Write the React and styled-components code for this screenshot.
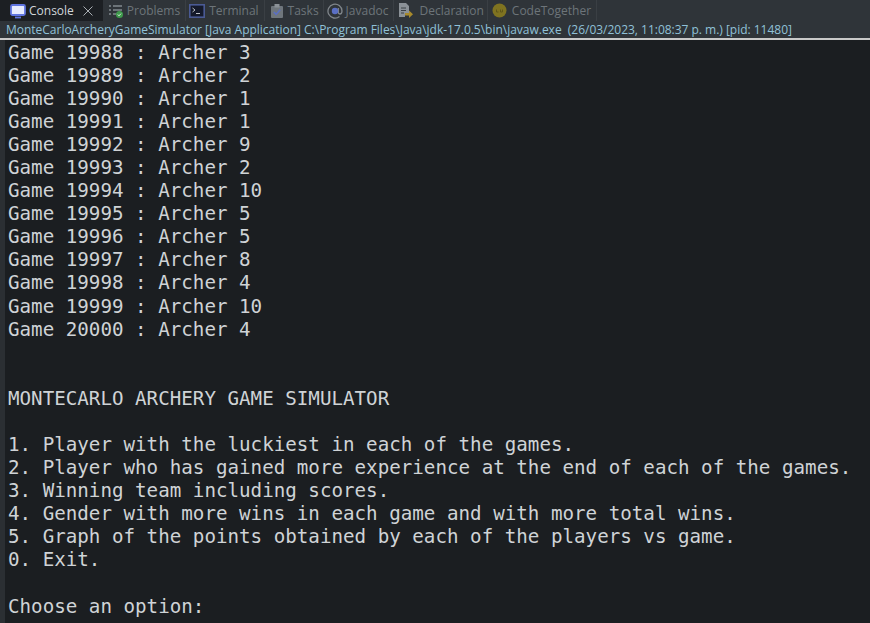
import styled, { createGlobalStyle } from "styled-components";

const GlobalStyle = createGlobalStyle`
  html, body {
    margin: 0;
    padding: 0;
    background: #1b1e21;
    overflow: hidden;
  }
`;

const Window = styled.div`
  width: 870px;
  height: 623px;
  display: flex;
  flex-direction: column;
  overflow: hidden;
  background: #1b1e21;
  font-family: "Open Sans", "Noto Sans", sans-serif;
`;

const TabBar = styled.div`
  display: flex;
  align-items: stretch;
  height: 21px;
  flex: none;
  background: #2f3439;
`;

const Tab = styled.div`
  display: flex;
  align-items: center;
  gap: ${(p) => p.$gap ?? 3}px;
  padding: 0 ${(p) => p.$pad ?? 5}px 0 ${(p) => p.$left ?? 3}px;
  font-size: 12px;
  white-space: nowrap;
  color: ${(p) => (p.$active ? "#d2d6da" : "#6d7479")};
  background: ${(p) => (p.$active ? "#1c1f23" : "transparent")};
  border-right: 1px solid ${(p) => (p.$active ? "#1c1f23" : "#3a3f44")};
`;

const CloseMark = styled.span`
  display: flex;
  margin-left: 5px;
  color: #a9aeb3;
`;

const TitleBar = styled.div`
  height: 16.5px;
  flex: none;
  display: flex;
  align-items: center;
  padding-left: 6px;
  background: #2f3439;
  color: #8fc1d8;
  font-size: 12px;
  letter-spacing: -0.015px;
  white-space: pre;
`;

const Rule = styled.div`
  height: 2px;
  flex: none;
  background: #c9c9c9;
`;

const ConsoleBody = styled.div`
  flex: 1;
  min-height: 0;
  display: flex;
`;

const Gutter = styled.div`
  width: 5px;
  flex: none;
  background: #2b2f33;
`;

const Output = styled.pre`
  margin: 0;
  padding: 1.2px 0 0 3px;
  color: #cfd3d6;
  font-family: "DejaVu Sans Mono", "Liberation Mono", monospace;
  font-size: 19.2px;
  line-height: 23.08px;
`;

function ConsoleIcon() {
  return (
    <svg width="16" height="16" viewBox="0 0 16 16">
      <rect x="1" y="2" width="14" height="10" rx="1.5" fill="#e6ebff" stroke="#5f74e0" strokeWidth="1.8" />
      <path d="M5 14.500h6" stroke="#5f74e0" strokeWidth="1.8" />
    </svg>
  );
}

function ProblemsIcon() {
  return (
    <svg width="16" height="16" viewBox="0 0 16 16">
      <path d="M1 3h2M1 7h2M1 11h2" stroke="#6d7479" strokeWidth="1.800" />
      <path d="M5 3h9M5 7h9M5 11h4" stroke="#6d7479" strokeWidth="1.800" />
      <circle cx="11.500" cy="11.500" r="3.500" fill="#3f9a4c" />
      <path d="M9.800 11.500l1.200 1.300 2-2.200" fill="none" stroke="#d8f0dc" strokeWidth="1" />
    </svg>
  );
}

function TerminalIcon() {
  return (
    <svg width="16" height="16" viewBox="0 0 16 16">
      <rect x="0.800" y="1.800" width="14.400" height="12.400" fill="#151a2b" stroke="#4a5a94" strokeWidth="1.600" />
      <path d="M3.500 5l2.500 2-2.500 2M7 10.500h4" fill="none" stroke="#b9bec4" strokeWidth="1" />
    </svg>
  );
}

function TasksIcon() {
  return (
    <svg width="16" height="16" viewBox="0 0 16 16">
      <rect x="2" y="3" width="12" height="12" rx="1" fill="#6f767c" />
      <rect x="5.500" y="1" width="5" height="3.500" fill="#8b9197" />
      <path d="M4.800 9l2.300 2.400 4-4.600" fill="none" stroke="#5a6fc4" strokeWidth="1.600" />
    </svg>
  );
}

function JavadocIcon() {
  return (
    <svg width="16" height="16" viewBox="0 0 16 16">
      <path d="M12.500 13.500A7 7 0 1 1 15 8c0 1.800-1 3-2.200 3-1 0-1.500-.7-1.500-1.700V5" fill="none" stroke="#80868b" strokeWidth="1.300" />
      <circle cx="8" cy="8" r="3.200" fill="#5a6fc4" />
    </svg>
  );
}

function DeclarationIcon() {
  return (
    <svg width="17" height="17" viewBox="0 0 17 17">
      <path d="M2 1h7l3 3v7H8v4H2z" fill="#8b9197" />
      <path d="M4 6h5M4 8.500h5M4 11h3" stroke="#3b4045" strokeWidth="1" />
      <path d="M8 11h4V8.500l4 3.700-4 3.800v-2.500H8z" fill="#a88a2c" />
    </svg>
  );
}

function CodeTogetherIcon() {
  return (
    <svg width="15" height="15" viewBox="0 0 15 15">
      <circle cx="7.500" cy="7.500" r="7" fill="#7f7320" />
      <path d="M4.500 6.500v2.500h2M8.500 6.500v2.500h2v-2.500" fill="none" stroke="#5f5618" strokeWidth="1" />
    </svg>
  );
}

const games = [
  [19988, 3],
  [19989, 2],
  [19990, 1],
  [19991, 1],
  [19992, 9],
  [19993, 2],
  [19994, 10],
  [19995, 5],
  [19996, 5],
  [19997, 8],
  [19998, 4],
  [19999, 10],
  [20000, 4],
];

const menu = `

MONTECARLO ARCHERY GAME SIMULATOR

1. Player with the luckiest in each of the games.
2. Player who has gained more experience at the end of each of the games.
3. Winning team including scores.
4. Gender with more wins in each game and with more total wins.
5. Graph of the points obtained by each of the players vs game.
0. Exit.

Choose an option:`;

export default function App() {
  const results = games.map(([game, archer]) => `Game ${game} : Archer ${archer}`).join("\n");

  return (
    <Window>
      <GlobalStyle />
      <TabBar>
        <Tab $active $left={10} $pad={8}>
          <ConsoleIcon />
          Console
          <CloseMark>
            <svg width="12" height="12" viewBox="0 0 12 12">
              <path d="M1.500 1.500l9 9M10.500 1.500l-9 9" stroke="currentColor" strokeWidth="1" />
            </svg>
          </CloseMark>
        </Tab>
        <Tab $left={5}>
          <ProblemsIcon />
          Problems
        </Tab>
        <Tab $gap={4}>
          <TerminalIcon />
          Terminal
        </Tab>
        <Tab $left={4} $pad={4}>
          <TasksIcon />
          Tasks
        </Tab>
        <Tab>
          <JavadocIcon />
          Javadoc
        </Tab>
        <Tab $gap={5} $pad={3}>
          <DeclarationIcon />
          Declaration
        </Tab>
        <Tab $left={4} $gap={5}>
          <CodeTogetherIcon />
          CodeTogether
        </Tab>
      </TabBar>
      <TitleBar>
        {"MonteCarloArcheryGameSimulator [Java Application] C:\\Program Files\\Java\\jdk-17.0.5\\bin\\javaw.exe  (26/03/2023, 11:08:37 p. m.) [pid: 11480]"}
      </TitleBar>
      <Rule />
      <ConsoleBody>
        <Gutter />
        <Output>
          {results}
          {"\n"}
          {menu}
        </Output>
      </ConsoleBody>
    </Window>
  );
}
